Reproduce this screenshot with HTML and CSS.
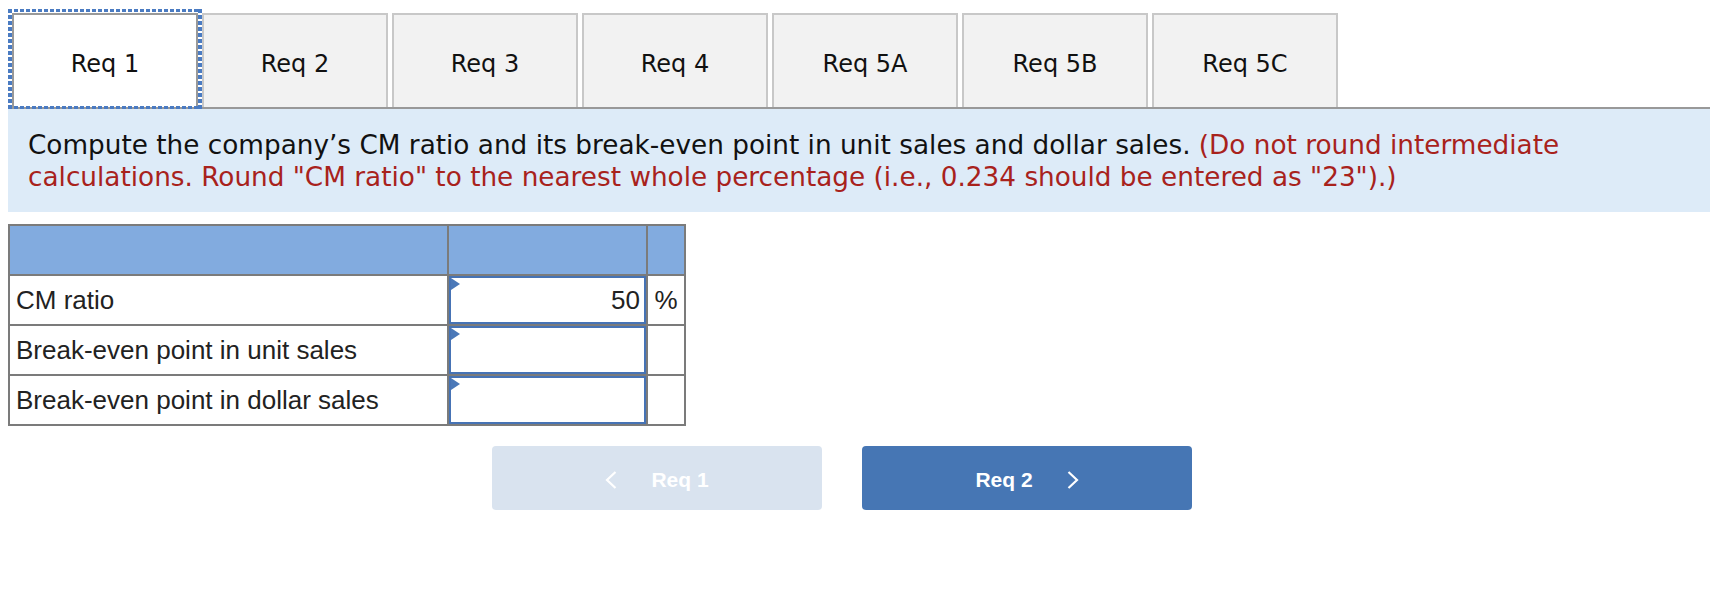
FILE: index.html
```html
<!DOCTYPE html>
<html lang="en">
<head>
<meta charset="utf-8">
<title>Req 1</title>
<link rel="stylesheet" href="styles.css">
</head>
<body>
<div class="page">
  <div class="tabs">
    <div class="tab active">Req 1</div>
    <div class="tab">Req 2</div>
    <div class="tab">Req 3</div>
    <div class="tab">Req 4</div>
    <div class="tab">Req 5A</div>
    <div class="tab">Req 5B</div>
    <div class="tab">Req 5C</div>
  </div>
  <div class="panel">
    <p class="prompt">Compute the company’s CM ratio and its break-even point in unit sales and dollar sales. <span class="note">(Do not round intermediate calculations. Round "CM ratio" to the nearest whole percentage (i.e., 0.234 should be entered as "23").)</span></p>
  </div>
  <table class="grid">
    <colgroup>
      <col class="c1">
      <col class="c2">
      <col class="c3">
    </colgroup>
    <tr class="head"><td></td><td></td><td></td></tr>
    <tr>
      <td class="label">CM ratio</td>
      <td class="entry"><div class="inbox"><span class="flag"></span>50</div></td>
      <td class="unit">%</td>
    </tr>
    <tr>
      <td class="label">Break-even point in unit sales</td>
      <td class="entry"><div class="inbox"><span class="flag"></span></div></td>
      <td class="unit"></td>
    </tr>
    <tr>
      <td class="label">Break-even point in dollar sales</td>
      <td class="entry"><div class="inbox"><span class="flag"></span></div></td>
      <td class="unit"></td>
    </tr>
  </table>
  <div class="nav">
    <button class="navbtn prev" disabled>
      <svg class="chev" width="12" height="18" viewBox="0 0 12 18"><polyline points="10.5,1 2,9 10.5,17" fill="none" stroke="#fff" stroke-width="2.2"/></svg>
      <span>Req 1</span>
    </button>
    <button class="navbtn next">
      <span>Req 2</span>
      <svg class="chev" width="12" height="18" viewBox="0 0 12 18"><polyline points="1.5,1 10,9 1.5,17" fill="none" stroke="#fff" stroke-width="2.2"/></svg>
    </button>
  </div>
</div>
</body>
</html>
```
FILE: styles.css
```css
body {
  margin: 8px;
  background: #ffffff;
}

.page {
  width: 1702px;
}

.tabs {
  display: flex;
  gap: 4px;
  padding: 5px 0 0 4px;
}

.tab {
  box-sizing: border-box;
  width: 186px;
  height: 94px;
  padding-top: 5px;
  border: 2px solid #c8c8c8;
  border-bottom: 0;
  background: #f2f2f2;
  display: flex;
  align-items: center;
  justify-content: center;
  font-family: "DejaVu Sans", Verdana, sans-serif;
  font-size: 24px;
  color: #111111;
}

.tab.active {
  position: relative;
  background: #ffffff;
  border-color: #999999;
}

.tab.active::before {
  content: "";
  position: absolute;
  left: -6px;
  right: -6px;
  top: -6px;
  bottom: -2px;
  z-index: 1;
  background:
    repeating-linear-gradient(90deg, #4a7bc2 0 4px, transparent 4px 6px) top left / 100% 3px no-repeat,
    repeating-linear-gradient(90deg, #4a7bc2 0 4px, transparent 4px 6px) bottom left / 100% 3px no-repeat,
    repeating-linear-gradient(180deg, #4a7bc2 0 4px, transparent 4px 6px) top left / 4px 100% no-repeat,
    repeating-linear-gradient(180deg, #4a7bc2 0 4px, transparent 4px 6px) top right / 4px 100% no-repeat;
}

.panel {
  border-top: 2px solid #999999;
  background: #ddebf8;
  padding: 20px 20px 19px 20px;
}

.prompt {
  margin: 0;
  font-family: "DejaVu Sans", Verdana, sans-serif;
  font-size: 26.3px;
  line-height: 32px;
  color: #111111;
}

.note {
  color: #a8221c;
}

.grid {
  margin-top: 12px;
  border-collapse: collapse;
  table-layout: fixed;
  width: 678px;
  font-family: "Liberation Sans", Arial, sans-serif;
  font-size: 26px;
  color: #222222;
}

.c1 { width: 439px; }
.c2 { width: 199px; }
.c3 { width: 38px; }

.grid td {
  border: 2px solid #7b7b7b;
  padding: 0;
  height: 48px;
}

.head td {
  background: #82abdf;
}

.grid td.label {
  padding-left: 6px;
}

.inbox {
  position: relative;
  box-sizing: border-box;
  height: 48px;
  border: 2px solid #4673b5;
  padding-right: 4px;
  text-align: right;
  line-height: 44px;
}

.flag {
  position: absolute;
  left: 0;
  top: 0;
  width: 0;
  height: 0;
  border-left: 9px solid #4a78b8;
  border-top: 6px solid transparent;
  border-bottom: 6px solid transparent;
}

.unit {
  text-align: center;
}

.nav {
  display: flex;
  gap: 40px;
  margin-top: 20px;
  padding-left: 484px;
}

.navbtn {
  width: 330px;
  height: 64px;
  border: 0;
  border-radius: 4px;
  padding: 3px 0 0 0;
  display: flex;
  align-items: center;
  justify-content: center;
  gap: 34px;
  font-family: "Liberation Sans", Arial, sans-serif;
  font-weight: bold;
  font-size: 21px;
  color: #ffffff;
}

.prev {
  background: #d9e3ef;
}

.next {
  background: #4676b4;
}

.chev {
  display: block;
}
```
